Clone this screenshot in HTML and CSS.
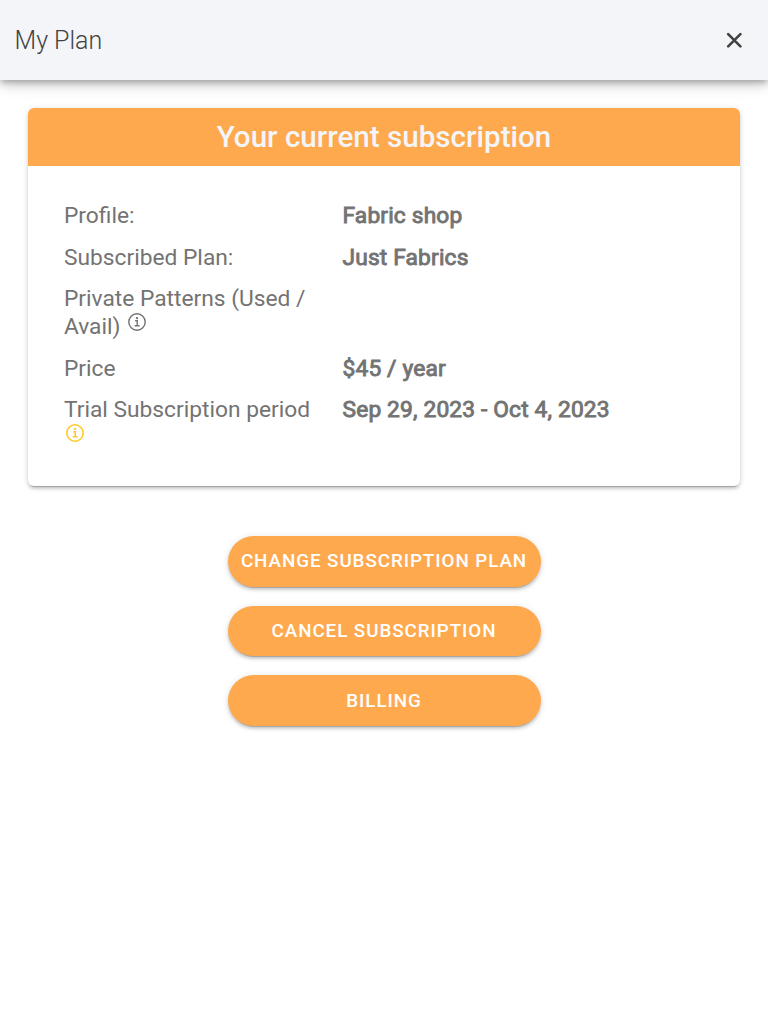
FILE: index.html
```html
<!DOCTYPE html>
<html lang="en">
<head>
    <meta charset="UTF-8">
    <meta name="viewport" content="width=device-width, initial-scale=1.0">
    <title>My Plan</title>
    <link rel="stylesheet" href="styles.css">
</head>
<body>
    <header class="toolbar">
        <h1>My Plan</h1>
        <button class="close-btn" aria-label="Close">
            <svg viewBox="0 0 16 16"><path d="M2.2 2.2L14.4 14.4M14.4 2.2L2.2 14.4"/></svg>
        </button>
    </header>

    <main>
        <section class="card">
            <h2>Your current subscription</h2>
            <div class="details">
                <div class="row">
                    <div class="label">Profile:</div>
                    <div class="value">Fabric shop</div>
                </div>
                <div class="row">
                    <div class="label">Subscribed Plan:</div>
                    <div class="value">Just Fabrics</div>
                </div>
                <div class="row">
                    <div class="label">Private Patterns (Used / Avail)
                        <svg class="info" viewBox="0 0 18 18"><circle cx="9" cy="9" r="8.2"/><path d="M7.1 7.7H9.2V12.7M6.7 12.8H11.6"/><circle class="dot" cx="9" cy="5.1" r="1.2"/></svg>
                    </div>
                    <div class="value"></div>
                </div>
                <div class="row">
                    <div class="label">Price</div>
                    <div class="value">$45 / year</div>
                </div>
                <div class="row">
                    <div class="label">Trial Subscription period
                        <svg class="info warning" viewBox="0 0 18 18"><circle cx="9" cy="9" r="8.2"/><path d="M7.1 7.7H9.2V12.7M6.7 12.8H11.6"/><circle class="dot" cx="9" cy="5.1" r="1.2"/></svg>
                    </div>
                    <div class="value">Sep 29, 2023 - Oct 4, 2023</div>
                </div>
            </div>
        </section>

        <div class="actions">
            <button class="btn">Change subscription plan</button>
            <button class="btn">Cancel subscription</button>
            <button class="btn">Billing</button>
        </div>
    </main>
</body>
</html>
```
FILE: styles.css
```css
:root {
    --primary: #ffa94f;
    --light: #f4f5f8;
    --warning: #ffc926;
    --text: #737373;
    --shadow: 0 4px 1px -3px rgba(0, 0, 0, 0.2), 0 3px 3px rgba(0, 0, 0, 0.14), 0 1px 7px rgba(0, 0, 0, 0.12);
}

* {
    box-sizing: border-box;
}

body {
    margin: 0;
    background: #fff;
    color: var(--text);
    font-family: Roboto, sans-serif;
    font-size: 22.75px;
    line-height: 28.44px;
}

h1, h2 {
    margin: 0;
}

.toolbar {
    display: flex;
    align-items: center;
    justify-content: space-between;
    height: 79.6px;
    padding: 3.4px 26px 0 14.5px;
    background: var(--light);
    box-shadow: 0 3px 6px -1px rgba(0, 0, 0, 0.25), 0 5px 14px rgba(0, 0, 0, 0.14), 0 1px 14px rgba(0, 0, 0, 0.12);
}

.toolbar h1 {
    color: #424242;
    font-size: 25px;
    font-weight: 300;
}

.close-btn {
    width: 16px;
    height: 16px;
    padding: 0;
    margin-top: -3px;
    border: none;
    background: none;
    cursor: pointer;
}

.close-btn svg {
    display: block;
    fill: none;
    stroke: #424242;
    stroke-width: 2.6;
    stroke-linecap: round;
}

main {
    padding: 28.4px;
}

.card {
    height: 378.4px;
    border-radius: 6px;
    overflow: hidden;
    box-shadow: var(--shadow);
}

.card h2 {
    height: 58.2px;
    background: var(--primary);
    color: var(--light);
    font-size: 29.6px;
    font-weight: 500;
    line-height: 58px;
    text-align: center;
}

.details {
    display: flex;
    flex-direction: column;
    gap: 12.9px;
    padding: 36px 35.6px;
}

.row {
    display: flex;
}

.label {
    width: 278.5px;
    padding-right: 24px;
}

.value {
    letter-spacing: 0.16px;
    -webkit-text-stroke: 0.9px var(--text);
}

.info {
    width: 18px;
    height: 18px;
    margin-left: 2px;
    vertical-align: 3px;
    fill: none;
    stroke: currentColor;
    stroke-width: 1.4;
}

.info .dot {
    fill: currentColor;
    stroke: none;
}

.info.warning {
    color: var(--warning);
    stroke-width: 1.6;
}

.actions {
    display: flex;
    flex-direction: column;
    align-items: center;
    gap: 19.2px;
    margin-top: 49.8px;
}

.btn {
    width: 313px;
    height: 50.4px;
    padding: 0;
    border: none;
    border-radius: 26px;
    background: var(--primary);
    box-shadow: var(--shadow);
    color: #fff;
    font-family: inherit;
    font-size: 18.8px;
    font-weight: 500;
    letter-spacing: 0.94px;
    text-transform: uppercase;
    cursor: pointer;
}
```
